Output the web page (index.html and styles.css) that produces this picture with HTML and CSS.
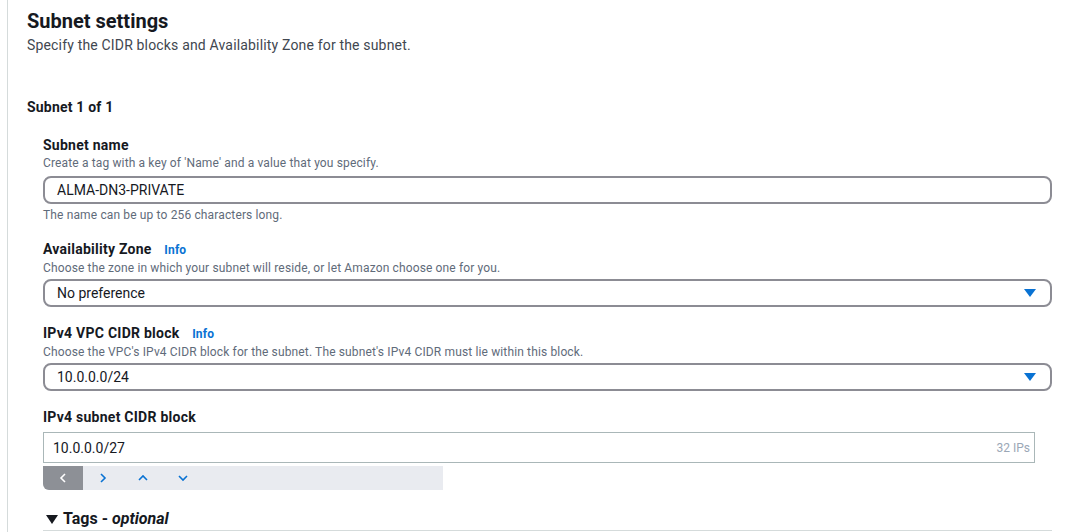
FILE: index.html
```html
<!DOCTYPE html>
<html>
<head>
<meta charset="utf-8">
<link rel="stylesheet" href="styles.css">
</head>
<body>
<div class="panel">
  <h2 class="title">Subnet settings</h2>
  <p class="desc">Specify the CIDR blocks and Availability Zone for the subnet.</p>
  <h3 class="subnet-count">Subnet 1 of 1</h3>
  <div class="fields">
    <div class="field">
      <div class="label">Subnet name</div>
      <div class="hint">Create a tag with a key of 'Name' and a value that you specify.</div>
      <div class="input rounded">ALMA-DN3-PRIVATE</div>
      <div class="hint after">The name can be up to 256 characters long.</div>
    </div>
    <div class="field">
      <div class="label">Availability Zone <span class="info">Info</span></div>
      <div class="hint">Choose the zone in which your subnet will reside, or let Amazon choose one for you.</div>
      <div class="input rounded select">No preference<span class="caret"></span></div>
    </div>
    <div class="field">
      <div class="label">IPv4 VPC CIDR block <span class="info">Info</span></div>
      <div class="hint">Choose the VPC's IPv4 CIDR block for the subnet. The subnet's IPv4 CIDR must lie within this block.</div>
      <div class="input rounded select">10.0.0.0/24<span class="caret"></span></div>
    </div>
    <div class="field">
      <div class="label">IPv4 subnet CIDR block</div>
      <div class="cidr-wrap">
        <div class="input square">10.0.0.0/27<span class="ips">32 IPs</span></div>
      </div>
      <div class="stepper">
        <span class="step active"><svg width="8" height="10" viewBox="0 0 8 10"><path d="M6 1 L2 5 L6 9" fill="none" stroke="#fff" stroke-width="1.6"/></svg></span>
        <span class="step"><svg width="8" height="10" viewBox="0 0 8 10"><path d="M2 1 L6 5 L2 9" fill="none" stroke="#0972d3" stroke-width="1.6"/></svg></span>
        <span class="step"><svg width="10" height="8" viewBox="0 0 10 8"><path d="M1 6 L5 2 L9 6" fill="none" stroke="#0972d3" stroke-width="1.6"/></svg></span>
        <span class="step"><svg width="10" height="8" viewBox="0 0 10 8"><path d="M1 2 L5 6 L9 2" fill="none" stroke="#0972d3" stroke-width="1.6"/></svg></span>
      </div>
    </div>
    <div class="tags">
      <span class="tri"></span>Tags - <em>optional</em>
    </div>
  </div>
</div>
</body>
</html>
```
FILE: styles.css
```css
* { box-sizing: border-box; }
html, body { margin: 0; padding: 0; background: #fff; }
body {
  font-family: Roboto, "Open Sans", Arial, sans-serif;
  color: #16191f;
  overflow: hidden;
}
.panel {
  margin-left: 7px;
  border-left: 1px solid #d5dbdb;
  padding: 8px 34px 0 19px;
  height: 532px;
}
.title {
  margin: 0;
  font-size: 20px;
  line-height: 26px;
  font-weight: 700;
}
.desc {
  margin: 1px 0 0;
  font-size: 14px;
  line-height: 20px;
  letter-spacing: 0.17px;
  color: #414750;
}
.subnet-count {
  margin: 42px 0 0;
  font-size: 14px;
  line-height: 20px;
  font-weight: 700;
  letter-spacing: 0.2px;
}
.fields {
  padding-left: 16px;
  margin-top: 18px;
}
.field { margin-bottom: 16px; }
.field + .field + .field { margin-top: 1px; }
.label {
  font-size: 14px;
  line-height: 20px;
  font-weight: 700;
  letter-spacing: 0.25px;
}
.info {
  color: #0972d3;
  font-size: 12px;
  font-weight: 700;
  letter-spacing: 0.15px;
  margin-left: 9px;
}
.hint {
  font-size: 12px;
  line-height: 16px;
  letter-spacing: 0.14px;
  color: #5f6b7a;
}
.hint.after { margin-top: 3px; }
.input {
  font-size: 14px;
  color: #16191f;
  display: flex;
  align-items: center;
  position: relative;
}
.input.rounded {
  margin-top: 5px;
  height: 28px;
  border: 2px solid #8c8c94;
  border-radius: 8px;
  padding: 0 12px;
}
.input.rounded.select { margin-top: 3px; }
.select { justify-content: space-between; }
.caret {
  width: 0; height: 0;
  border-left: 6px solid transparent;
  border-right: 6px solid transparent;
  border-top: 8px solid #0972d3;
  margin-right: 2px;
}
.cidr-wrap { margin-top: 5px; padding-right: 17px; }
.input.square {
  height: 31px;
  border: 1px solid #aab7b8;
  padding: 0 4px 0 9px;
  justify-content: space-between;
}
.ips { font-size: 12px; color: #9ba7b6; }
.stepper {
  display: flex;
  width: 400px;
  height: 24px;
  margin-top: 3px;
  background: #e9ebf0;
  border-radius: 0 0 0 6px;
  overflow: hidden;
}
.step {
  width: 40px;
  display: flex;
  align-items: center;
  justify-content: center;
}
.step.active { background: #8d9096; }
.tags {
  margin-top: 19px;
  font-size: 16px;
  line-height: 20px;
  font-weight: 700;
  padding-left: 3px;
  padding-bottom: 1px;
  border-bottom: 1px solid #d5dbdb;
  display: flex;
  align-items: center;
}
.tri {
  width: 0; height: 0;
  border-left: 6px solid transparent;
  border-right: 6px solid transparent;
  border-top: 9px solid #16191f;
  margin-right: 5px;
}
.tags em { font-weight: 700; font-style: italic; margin-left: 4px; }
```
